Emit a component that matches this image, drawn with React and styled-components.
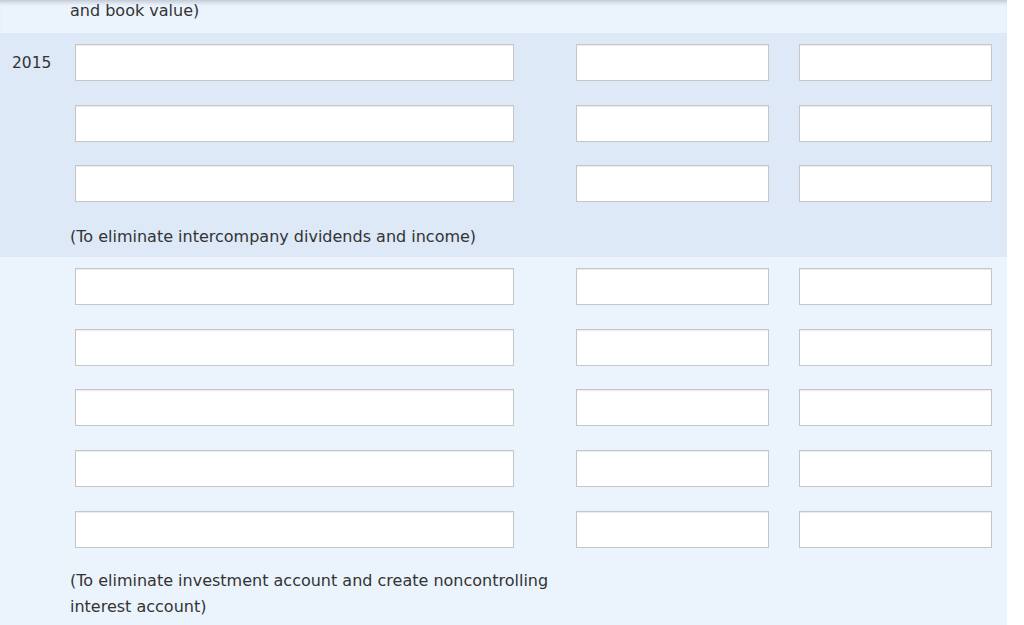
import React from "react";
import styled, { createGlobalStyle } from "styled-components";

const Global = createGlobalStyle`
  html, body { margin: 0; padding: 0; background: #ffffff; }
  body { font-family: "DejaVu Sans", Verdana, sans-serif; color: #333333; overflow: hidden; }
`;

const Page = styled.div`
  width: 1007px;
  height: 625px;
  overflow: hidden;
  display: flex;
  flex-direction: column;
`;

const Band = styled.section`
  background: ${(p) => (p.$dark ? "#dde9f7" : "#ebf3fd")};
  padding: ${(p) => p.$pad || "11px 0 0 0"};
  display: flex;
  flex-direction: column;
  gap: 23.6px;
  flex-shrink: 0;
`;

const TopBand = styled.div`
  height: 33px;
  flex-shrink: 0;
  background: #ebf3fd;
  box-shadow: inset 0 5px 4px -3px rgba(60, 70, 90, 0.28);
  display: flex;
  align-items: flex-end;
  padding-bottom: 9px;
  box-sizing: border-box;
`;

const Note = styled.p`
  margin: ${(p) => p.$margin || "0"};
  padding-left: 70px;
  width: 490px;
  font-size: 16px;
  line-height: 26px;
  color: #333333;
`;

const EntryRow = styled.div`
  display: flex;
  align-items: center;
  height: 37px;
`;

const YearLabel = styled.div`
  width: 75px;
  padding-left: 12px;
  box-sizing: border-box;
  font-size: 15.5px;
  color: #333333;
  flex-shrink: 0;
`;

const Field = styled.input`
  box-sizing: border-box;
  width: ${(p) => p.$w}px;
  height: 37px;
  margin: 0 0 0 ${(p) => p.$ml || 0}px;
  padding: 0 6px;
  border: 1px solid #c6c6c6;
  border-radius: 0;
  background: #ffffff;
  box-shadow: inset 0 1px 1px rgba(0, 0, 0, 0.08);
  font-family: inherit;
  font-size: 15px;
  outline: none;
  flex-shrink: 0;
`;

const Entry = ({ label }) => (
  <EntryRow>
    <YearLabel>{label}</YearLabel>
    <Field $w={439} />
    <Field $w={193} $ml={62} />
    <Field $w={193} $ml={30} />
  </EntryRow>
);

export default function App() {
  return (
    <>
      <Global />
      <Page>
        <TopBand>
          <Note>and book value)</Note>
        </TopBand>
        <Band $dark $pad="11px 0 7px 0">
          <Entry label="2015" />
          <Entry />
          <Entry />
          <Note $margin="-1.6px 0 0 0">(To eliminate intercompany dividends and income)</Note>
        </Band>
        <Band $pad="11px 0 10px 0">
          <Entry />
          <Entry />
          <Entry />
          <Entry />
          <Entry />
          <Note $margin="-3px 0 0 0">
            (To eliminate investment account and create noncontrolling interest account)
          </Note>
        </Band>
      </Page>
    </>
  );
}
